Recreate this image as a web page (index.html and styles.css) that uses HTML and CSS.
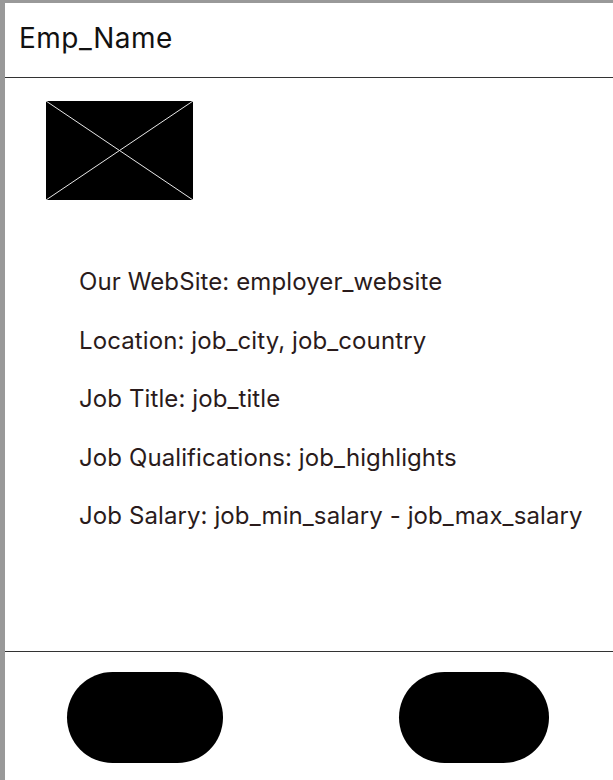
FILE: index.html
```html
<!DOCTYPE html>
<html lang="en">
<head>
<meta charset="utf-8">
<title>Employer</title>
<link rel="stylesheet" href="styles.css">
</head>
<body>
<div class="frame">
  <header class="topbar">
    <h1 class="emp-name">Emp_Name</h1>
  </header>
  <main class="content">
    <div class="logo">
      <svg width="147" height="99" viewBox="0 0 147 99" aria-hidden="true">
        <rect x="0" y="0" width="147" height="99" fill="#000"/>
        <line x1="0" y1="0" x2="147" y2="99" stroke="#e8e8e8" stroke-width="1"/>
        <line x1="147" y1="0" x2="0" y2="99" stroke="#e8e8e8" stroke-width="1"/>
      </svg>
    </div>
    <ul class="info">
      <li>Our WebSite: employer_website</li>
      <li>Location: job_city, job_country</li>
      <li>Job Title: job_title</li>
      <li>Job Qualifications: job_highlights</li>
      <li>Job Salary: job_min_salary - job_max_salary</li>
    </ul>
  </main>
  <footer class="actions">
    <button class="pill pill-left" type="button"></button>
    <button class="pill pill-right" type="button"></button>
  </footer>
</div>
</body>
</html>
```
FILE: styles.css
```css
html, body {
  margin: 0;
  padding: 0;
  background: #fff;
}
body {
  font-family: Inter, "Noto Sans", "Liberation Sans", sans-serif;
}
.frame {
  box-sizing: border-box;
  width: 613px;
  height: 780px;
  border-top: 3px solid #999;
  border-left: 5px solid #999;
  display: flex;
  flex-direction: column;
  overflow: hidden;
}
.topbar {
  box-sizing: border-box;
  height: 75px;
  padding: 19px 14px 0;
  border-bottom: 1px solid #333;
}
.emp-name {
  margin: 0;
  font-size: 28px;
  line-height: 32px;
  letter-spacing: 0.5px;
  font-weight: 400;
  color: #111;
}
.content {
  box-sizing: border-box;
  height: 574px;
  padding: 23px 0 0 41px;
  border-bottom: 1px solid #333;
}
.logo {
  width: 147px;
  height: 99px;
}
.logo svg {
  display: block;
}
.info {
  list-style: none;
  margin: 53px 0 0;
  padding: 0 0 0 33px;
  color: #2a1b1b;
  font-size: 24px;
  letter-spacing: 0.1px;
  line-height: 58.6px;
}
.actions {
  display: flex;
  align-items: flex-start;
  padding: 20px 0 0 62px;
  gap: 176px;
}
.pill {
  height: 91px;
  border: none;
  border-radius: 46px;
  background: #000;
  padding: 0;
}
.pill-left {
  width: 156px;
}
.pill-right {
  width: 150px;
}
```
